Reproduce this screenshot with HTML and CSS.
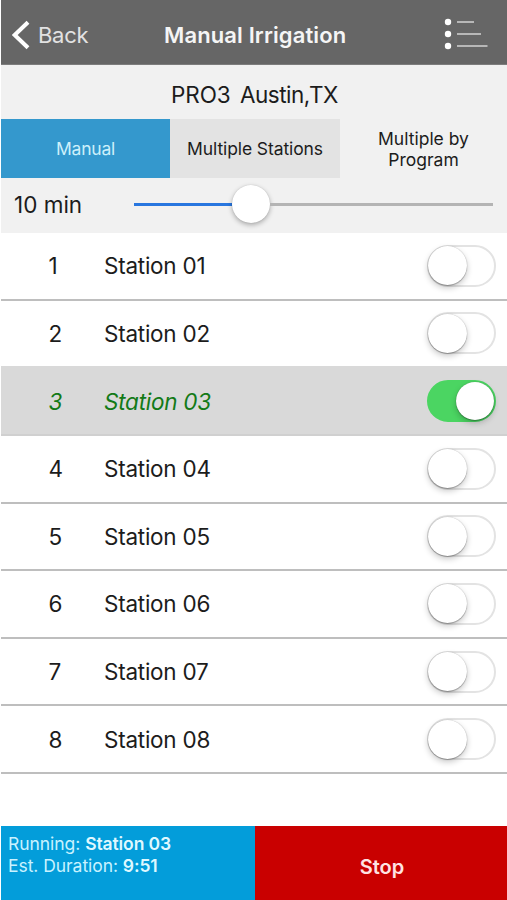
FILE: index.html
```html
<!DOCTYPE html>
<html lang="en">
<head>
<meta charset="utf-8">
<title>Manual Irrigation</title>
<link rel="stylesheet" href="styles.css">
</head>
<body>
<div class="app">
  <header class="bar">
    <a class="back"><svg width="18" height="30" viewBox="0 0 18 30"><path d="M16 2.2 L2.7 15 L16 27.8" fill="none" stroke="#fff" stroke-width="4"/></svg><span class="back-label">Back</span></a>
    <h1 class="title">Manual Irrigation</h1>
    <svg class="menu" width="44" height="32" viewBox="0 0 44 32"><g fill="#fff"><circle cx="4" cy="4" r="3.2"/><circle cx="4" cy="16" r="3.2"/><circle cx="4" cy="28" r="3.2"/></g><path d="M13 4H30M13 16H37M13 28H43.500" stroke="#d2d2d2" stroke-width="1.700"/></svg>
  </header>
  <div class="site"><span class="site-name">PRO3</span><span class="site-place">Austin,TX</span></div>
  <nav class="tabs">
    <div class="tab active"><span class="t-manual">Manual</span></div>
    <div class="tab shaded"><span class="t-stations">Multiple Stations</span></div>
    <div class="tab"><span class="t-program">Multiple by<br>Program</span></div>
  </nav>
  <div class="duration">
    <span class="minutes">10 min</span>
    <div class="slider"><div class="filled"></div><div class="knob"></div><div class="rest"></div></div>
  </div>
  <main class="list">
    <div class="row"><span class="num">1</span><span class="name">Station 01</span><span class="switch"><i class="thumb"></i></span></div>
    <div class="row"><span class="num">2</span><span class="name">Station 02</span><span class="switch"><i class="thumb"></i></span></div>
    <div class="row running"><span class="num">3</span><span class="name">Station 03</span><span class="switch on"><i class="thumb"></i></span></div>
    <div class="row"><span class="num">4</span><span class="name">Station 04</span><span class="switch"><i class="thumb"></i></span></div>
    <div class="row"><span class="num">5</span><span class="name">Station 05</span><span class="switch"><i class="thumb"></i></span></div>
    <div class="row"><span class="num">6</span><span class="name">Station 06</span><span class="switch"><i class="thumb"></i></span></div>
    <div class="row"><span class="num">7</span><span class="name">Station 07</span><span class="switch"><i class="thumb"></i></span></div>
    <div class="row"><span class="num">8</span><span class="name">Station 08</span><span class="switch"><i class="thumb"></i></span></div>
  </main>
  <footer class="footer">
    <div class="status"><div class="line1">Running: <b>Station 03</b></div><div class="line2">Est. Duration: <b>9:51</b></div></div>
    <div class="stop"><span>Stop</span></div>
  </footer>
</div>
</body>
</html>
```
FILE: styles.css
```css
* { box-sizing: border-box; }
body { margin: 0; background: #fff; color: #1c1c1c; font-family: Inter, "Liberation Sans", sans-serif; }
.app { display: flex; flex-direction: column; width: 507px; height: 900px; overflow: hidden; padding-left: 1px; }
span, h1, .status { white-space: nowrap; }
.bar { height: 65px; background: #666; color: #fff; display: grid; grid-template-columns: 163px 1fr 63px; align-items: center; padding-top: 6px; border-bottom: 1px solid #7d7d7d; }
.back { display: flex; align-items: center; gap: 8px; padding-left: 11px; }
.back-label { font-size: 22px; color: #e2e2e2; letter-spacing: -.3px; }
.title { margin: 0; font-size: 22px; font-weight: 600; color: #f5f5f5; letter-spacing: .12px; }
.menu { margin-top: -3px; }
.site { height: 54px; background: #f1f1f1; display: flex; align-items: center; gap: 9px; padding: 4px 0 0 170px; font-size: 22.5px; }
.site-name { width: 60px; letter-spacing: -.1px; }
.site-place { letter-spacing: -.5px; }
.tabs { height: 59px; background: #f1f1f1; display: grid; grid-template-columns: 169px 170px 1fr; font-size: 17.5px; line-height: 21px; text-align: center; }
.tab { display: flex; align-items: center; justify-content: center; }
.active { background: #3498cd; color: #cdf0fb; }
.t-manual { letter-spacing: -.2px; }
.t-stations { letter-spacing: -.1px; }
.shaded { background: #e3e3e3; }
.duration { height: 55px; background: #f1f1f1; display: flex; align-items: center; padding: 0 14px 3px 13px; }
.minutes { width: 120px; font-size: 22.5px; }
.slider { flex: 1; display: flex; align-items: center; }
.filled { width: 98px; height: 3px; background: #2876df; }
.knob { width: 38px; height: 38px; border-radius: 50%; background: #fff; box-shadow: 0 2px 5px rgba(0,0,0,.3), 0 0 1px rgba(0,0,0,.2); }
.rest { flex: 1; height: 3px; background: #b4b4b4; }
.list { height: 541px; display: grid; grid-template-rows: repeat(8, 1fr); }
.row { display: grid; grid-template-columns: 103px 1fr 69px; align-items: center; padding-right: 11px; border-bottom: 2px solid #bebebe; font-size: 22.5px; }
.num { padding-left: 47.5px; }
.name { letter-spacing: -.25px; }
.running { background: #d9d9d9; color: #137a17; font-style: italic; border-bottom-color: #d0d0d0; }
.row:nth-child(2) { border-bottom-color: #d9d9d9; }
.switch { width: 69px; height: 42px; border: 2px solid #e3e3e3; border-radius: 21px; display: flex; align-items: center; }
.thumb { width: 39px; height: 39px; margin-left: -1px; border-radius: 50%; background: #fff; box-shadow: 0 3px 6px rgba(0,0,0,.22), 0 1px 1px rgba(0,0,0,.25), 0 0 1px rgba(0,0,0,.3); }
.on { background: #4bd562; border-color: #4bd562; justify-content: flex-end; }
.on .thumb { width: 38px; height: 38px; margin: 0; }
.footer { margin-top: auto; height: 74px; display: grid; grid-template-columns: 254px 1fr; }
.status { background: #039dda; color: #c9f2ff; padding: 7px 0 0 7px; font-size: 17.5px; line-height: 22px; letter-spacing: -.05px; }
.status b { font-weight: 600; color: #dff8ff; letter-spacing: -.1px; }
.stop { background: #c90000; color: #ffe3e3; display: flex; align-items: center; justify-content: center; padding: 8px 0 0 2px; font-size: 20px; font-weight: 600; }
```
